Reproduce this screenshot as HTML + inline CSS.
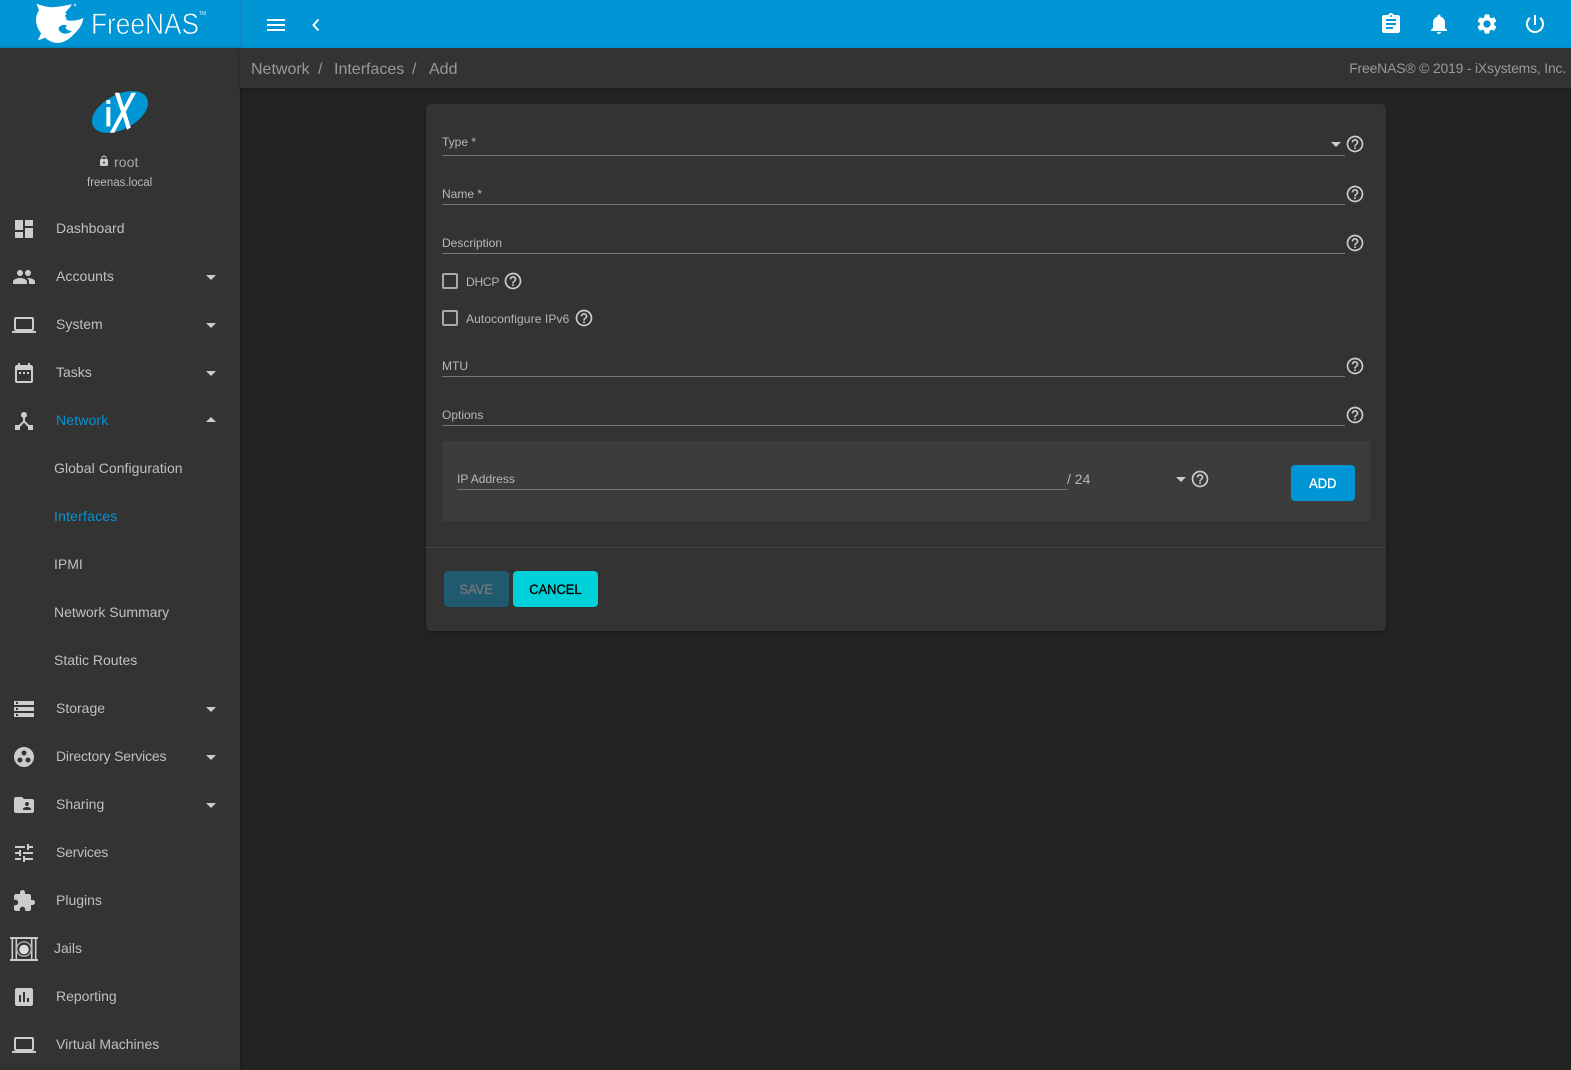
<!DOCTYPE html>
<html lang="en">
<head>
<meta charset="utf-8">
<title>FreeNAS - Network Interfaces Add</title>
<style>
html,body{margin:0;padding:0;width:1571px;height:1070px;overflow:hidden;background:#232323;font-family:"Liberation Sans",Arial,sans-serif;color:#c8c8c8}
*{box-sizing:border-box}
.a{position:absolute;white-space:nowrap}
svg{position:absolute;display:block;fill:currentColor}
#top{position:absolute;left:0;top:0;width:1571px;height:48px;background:#0095d5}
#side{position:absolute;left:0;top:48px;width:240px;height:1022px;background:#333;box-shadow:1px 0 3px rgba(0,0,0,.3)}
#crumb{position:absolute;left:240px;top:48px;width:1331px;height:40px;background:#333;box-shadow:0 1px 3px rgba(0,0,0,.25)}
#card{position:absolute;left:426px;top:104px;width:960px;height:527px;background:#333;border-radius:5px;box-shadow:0 1px 3px rgba(0,0,0,.4)}
.m{position:absolute;left:56px;font-size:14px;line-height:20px;color:#c0c0c0;white-space:nowrap}
.s{left:54px}
.m.blue,.blue{color:#0095d5}
.ic{color:#ccc}
.car{position:absolute;left:206px;width:0;height:0;border-left:5px solid transparent;border-right:5px solid transparent;border-top:5px solid #ccc}
.car.up{border-top:0;border-bottom:5px solid #ccc}
.lab{position:absolute;font-size:12px;line-height:16px;color:#b8b8b8;white-space:nowrap}
.ln{position:absolute;height:1px;background:#777}
.cb{position:absolute;width:16px;height:16px;border:2px solid #a9a9a9;border-radius:2px}
.btn{position:absolute;height:36px;border-radius:4px;text-align:center;font-size:14px;line-height:36px}
.btn span{display:inline-block;transform:scaleX(.92);-webkit-text-stroke:.35px currentColor}
.cr{position:absolute;top:60px;font-size:16px;line-height:20px;color:#999;white-space:nowrap}
</style>
</head>
<body>
<svg width="0" height="0" style="position:absolute">
<defs>
<symbol id="help" viewBox="0 0 24 24"><path d="M11 18h2v-2h-2v2zm1-16C6.480 2 2 6.480 2 12s4.480 10 10 10 10-4.480 10-10S17.520 2 12 2zm0 18c-4.410 0-8-3.590-8-8s3.590-8 8-8 8 3.590 8 8-3.590 8-8 8zm0-14c-2.210 0-4 1.790-4 4h2c0-1.100.9-2 2-2s2 .9 2 2c0 2-3 1.750-3 5h2c0-2.250 3-2.500 3-5 0-2.210-1.790-4-4-4z"/></symbol>
<symbol id="laptop" viewBox="0 0 24 24"><path d="M20 18c1.100 0 1.990-.9 1.990-2L22 6c0-1.100-.9-2-2-2H4c-1.100 0-2 .9-2 2v10c0 1.100.9 2 2 2H0v2h24v-2h-4zM4 6h16v10H4V6z"/></symbol>
<clipPath id="xclip"><path d="M105 85H152V117L130 128L118 135H105Z"/></clipPath>
</defs>
</svg>

<div id="top"></div>
<div id="side"></div>
<div id="crumb"></div>
<div class="a" style="left:240px;top:0;width:1px;height:48px;background:#0a88c2"></div>

<!-- logo -->
<svg style="left:30px;top:0;color:#fff" width="64" height="48" viewBox="30 0 64 48">
<path fill-rule="evenodd" d="M36.500 3.800C41.500 5.500 46.500 7.300 52 7.200C59 7 66 5.500 72 4.300C70.500 6.800 68.500 8.800 67 10.500L65.300 12.500L66.500 14.300L64.800 15.800L66.500 18L66 19.800C69 21.200 76 21.300 83.500 18C82.500 23 80.500 27.500 76.500 31.500C72.500 36 67 41.500 60 42.800C54.500 43.500 49 41.300 45 37.600C43 38.700 40.500 39.600 37.800 40.300C39.200 37.800 40.300 35.500 41 33.300C37.500 28.500 35.700 23.500 36.100 18.500C36.400 15 37.500 12.500 39 10.500C38.200 8.500 37.400 6 36.500 3.800ZM58.500 29C59.800 32.500 63 34 66.500 33.600C69 33.300 71 32.200 72 30.800C68.800 31 65.800 29.500 65.500 27.200L67.200 25.800L64.500 24.800C61 25 58.500 26.800 58.500 29Z"/>
<circle cx="75" cy="5" r="1.300" fill="#a8d8ee"/>
</svg>
<svg style="left:85px;top:0" width="130" height="48" viewBox="85 0 130 48">
<text x="91" y="34" font-family="'Liberation Sans',sans-serif" font-size="29.500" textLength="108" lengthAdjust="spacingAndGlyphs" fill="#fff" stroke="#0095d5" stroke-width=".75">FreeNAS</text>
<text x="199" y="15" font-family="'Liberation Sans',sans-serif" font-size="5" fill="#e0f2fa">TM</text>
</svg>

<!-- top left buttons -->
<div class="a" style="left:267px;top:19px;width:18px;height:2px;background:#fff"></div>
<div class="a" style="left:267px;top:24px;width:18px;height:2px;background:#fff"></div>
<div class="a" style="left:267px;top:29px;width:18px;height:2px;background:#fff"></div>
<svg style="left:310px;top:18px;color:#fff" width="12" height="14" viewBox="0 0 12 14"><path d="M8.500 1.500L3.500 7l5 5.500" fill="none" stroke="#fff" stroke-width="2"/></svg>

<!-- top right icons -->
<svg style="left:1379px;top:12px;color:#fff" width="24" height="24" viewBox="0 0 24 24"><path d="M19 3h-4.180C14.400 1.840 13.300 1 12 1c-1.300 0-2.400.84-2.820 2H5c-1.100 0-2 .9-2 2v14c0 1.100.9 2 2 2h14c1.100 0 2-.9 2-2V5c0-1.100-.9-2-2-2zm-7 0c.55 0 1 .45 1 1s-.45 1-1 1-1-.45-1-1 .45-1 1-1zm2 14H7v-2h7v2zm3-4H7v-2h10v2zm0-4H7V7h10v2z"/></svg>
<svg style="left:1427px;top:12px;color:#fff" width="24" height="24" viewBox="0 0 24 24"><path d="M12 22c1.100 0 2-.9 2-2h-4c0 1.100.89 2 2 2zm6-6v-5c0-3.070-1.640-5.640-4.500-6.320V4c0-.83-.67-1.500-1.500-1.500s-1.500.67-1.500 1.500v.68C7.630 5.360 6 7.920 6 11v5l-2 2v1h16v-1l-2-2z"/></svg>
<svg style="left:1475px;top:12px;color:#fff" width="24" height="24" viewBox="0 0 24 24"><path d="M19.140 12.940c.04-.3.06-.61.06-.94 0-.32-.02-.64-.07-.94l2.030-1.580c.18-.14.23-.41.12-.61l-1.920-3.320c-.12-.22-.37-.29-.59-.22l-2.390.96c-.5-.38-1.030-.7-1.620-.94l-.36-2.540c-.04-.24-.24-.41-.48-.41h-3.840c-.24 0-.43.17-.47.41l-.36 2.540c-.59.24-1.130.57-1.620.94l-2.390-.96c-.22-.08-.47 0-.59.22L2.740 8.870c-.12.21-.08.47.12.61l2.030 1.580c-.05.3-.09.63-.09.94s.02.64.07.94l-2.030 1.580c-.18.14-.23.41-.12.61l1.920 3.320c.12.22.37.29.59.22l2.390-.96c.5.38 1.030.7 1.620.94l.36 2.540c.05.24.24.41.48.41h3.840c.24 0 .44-.17.47-.41l.36-2.540c.59-.24 1.130-.56 1.620-.94l2.390.96c.22.08.47 0 .59-.22l1.920-3.320c.12-.22.07-.47-.12-.61l-2.010-1.580zM12 15.600c-1.980 0-3.600-1.620-3.600-3.600s1.620-3.600 3.600-3.600 3.600 1.620 3.600 3.600-1.620 3.600-3.600 3.600z"/></svg>
<svg style="left:1523px;top:12px;color:#fff" width="24" height="24" viewBox="0 0 24 24"><path d="M13 3h-2v10h2V3zm4.830 2.170l-1.420 1.420C17.990 7.860 19 9.810 19 12c0 3.870-3.130 7-7 7s-7-3.130-7-7c0-2.190 1.010-4.140 2.580-5.420L6.170 5.170C4.230 6.820 3 9.260 3 12c0 4.970 4.030 9 9 9s9-4.030 9-9c0-2.740-1.230-5.180-3.170-6.830z"/></svg>

<!-- breadcrumb -->
<div class="cr" style="left:251px">Network</div>
<div class="cr" style="left:318px">/</div>
<div class="cr" style="left:334px">Interfaces</div>
<div class="cr" style="left:412px">/</div>
<div class="cr" style="left:429px">Add</div>
<div class="a" style="right:5px;top:58px;font-size:14px;line-height:20px;color:#999;letter-spacing:-.21px">FreeNAS® © 2019 - iXsystems, Inc.</div>

<!-- user -->
<svg style="left:88px;top:86px;color:#fff" width="64" height="52" viewBox="88 86 64 52">
<ellipse cx="120" cy="112" rx="30.400" ry="17.300" fill="#0095d5" transform="rotate(-28 120 112)"/>
<text x="0" y="0" font-family="'Liberation Sans',sans-serif" font-size="35" fill="#fff" stroke="#fff" stroke-width=".8" transform="translate(104.500 126)">i</text>
<g clip-path="url(#xclip)"><text x="0" y="0" font-family="'Liberation Sans',sans-serif" font-size="56" fill="#fff" stroke="#fff" stroke-width="1.400" transform="translate(110 132) skewX(-6) scale(.6 1)">X</text></g>
</svg>
<svg class="ic" style="left:98px;top:155px;color:#ccc" width="12" height="12" viewBox="0 0 24 24"><path d="M18 8h-1V6c0-2.760-2.240-5-5-5S7 3.240 7 6v2H6c-1.100 0-2 .9-2 2v10c0 1.100.9 2 2 2h12c1.100 0 2-.9 2-2V10c0-1.100-.9-2-2-2zm-6 9c-1.100 0-2-.9-2-2s.9-2 2-2 2 .9 2 2-.9 2-2 2zm3.100-9H8.900V6c0-1.710 1.390-3.100 3.100-3.100 1.710 0 3.100 1.390 3.100 3.100v2z"/></svg>
<div class="a" style="left:114px;top:152px;font-size:14px;line-height:20px;color:#aaa;letter-spacing:.1px">root</div>
<div class="a" style="left:87px;top:175px;font-size:11.500px;line-height:16px;color:#bbb">freenas.local</div>

<!-- sidebar -->
<svg class="ic" style="left:12px;top:217px" width="24" height="24" viewBox="0 0 24 24"><path d="M3 13h8V3H3v10zm0 8h8v-6H3v6zm10 0h8V11h-8v10zm0-18v6h8V3h-8z"/></svg>
<div class="m" style="top:218px">Dashboard</div>

<svg class="ic" style="left:12px;top:265px" width="24" height="24" viewBox="0 0 24 24"><path d="M16 11c1.660 0 2.990-1.340 2.990-3S17.660 5 16 5c-1.660 0-3 1.340-3 3s1.340 3 3 3zm-8 0c1.660 0 2.990-1.340 2.990-3S9.660 5 8 5C6.340 5 5 6.340 5 8s1.340 3 3 3zm0 2c-2.330 0-7 1.170-7 3.500V19h14v-2.500c0-2.330-4.670-3.500-7-3.500zm8 0c-.29 0-.62.02-.97.05 1.160.84 1.970 1.970 1.970 3.450V19h6v-2.500c0-2.330-4.670-3.500-7-3.500z"/></svg>
<div class="m" style="top:266px;letter-spacing:.05px">Accounts</div><div class="car" style="top:275px"></div>

<svg class="ic" style="left:12px;top:313px" width="24" height="24"><use href="#laptop"/></svg>
<div class="m" style="top:314px">System</div><div class="car" style="top:323px"></div>

<svg class="ic" style="left:12px;top:361px" width="24" height="24" viewBox="0 0 24 24"><path d="M9 11H7v2h2v-2zm4 0h-2v2h2v-2zm4 0h-2v2h2v-2zm2-7h-1V2h-2v2H8V2H6v2H5c-1.110 0-1.990.9-1.990 2L3 20c0 1.100.89 2 2 2h14c1.100 0 2-.9 2-2V6c0-1.100-.9-2-2-2zm0 16H5V9h14v11z"/></svg>
<div class="m" style="top:362px">Tasks</div><div class="car" style="top:371px"></div>

<svg class="ic" style="left:12px;top:409px" width="24" height="24" viewBox="0 0 24 24"><path d="M17 16l-4-4V8.820C14.160 8.400 15 7.300 15 6c0-1.660-1.340-3-3-3S9 4.340 9 6c0 1.300.84 2.400 2 2.820V12l-4 4H3v5h5v-3.050l4-4.200 4 4.200V21h5v-5h-4z"/></svg>
<div class="m blue" style="top:410px;letter-spacing:.15px">Network</div><div class="car up" style="top:417px"></div>

<div class="m s" style="top:458px;letter-spacing:.05px">Global Configuration</div>
<div class="m s blue" style="top:506px;letter-spacing:.2px">Interfaces</div>
<div class="m s" style="top:554px">IPMI</div>
<div class="m s" style="top:602px">Network Summary</div>
<div class="m s" style="top:650px">Static Routes</div>

<svg class="ic" style="left:12px;top:697px" width="24" height="24" viewBox="0 0 24 24"><path d="M2 20h20v-4H2v4zm2-3h2v2H4v-2zM2 4v4h20V4H2zm4 3H4V5h2v2zm-4 7h20v-4H2v4zm2-3h2v2H4v-2z"/></svg>
<div class="m" style="top:698px">Storage</div><div class="car" style="top:707px"></div>

<svg class="ic" style="left:12px;top:745px" width="24" height="24" viewBox="0 0 24 24"><path d="M12 2C6.480 2 2 6.480 2 12s4.480 10 10 10 10-4.480 10-10S17.520 2 12 2zM8 17.500c-1.380 0-2.500-1.120-2.500-2.500s1.120-2.500 2.500-2.500 2.500 1.120 2.500 2.500-1.120 2.500-2.500 2.500zM9.500 8c0-1.380 1.120-2.500 2.500-2.500s2.500 1.120 2.500 2.500-1.120 2.500-2.500 2.500S9.500 9.380 9.500 8zm6.500 9.500c-1.380 0-2.500-1.120-2.500-2.500s1.120-2.500 2.500-2.500 2.500 1.120 2.500 2.500-1.120 2.500-2.500 2.500z"/></svg>
<div class="m" style="top:746px;letter-spacing:-.18px">Directory Services</div><div class="car" style="top:755px"></div>

<svg class="ic" style="left:12px;top:793px" width="24" height="24" viewBox="0 0 24 24"><path d="M20 6h-8l-2-2H4c-1.100 0-1.990.9-1.990 2L2 18c0 1.100.9 2 2 2h16c1.100 0 2-.9 2-2V8c0-1.100-.9-2-2-2zm-5 3c1.100 0 2 .9 2 2s-.9 2-2 2-2-.9-2-2 .9-2 2-2zm4 8h-8v-1c0-1.330 2.670-2 4-2s4 .67 4 2v1z"/></svg>
<div class="m" style="top:794px">Sharing</div><div class="car" style="top:803px"></div>

<svg class="ic" style="left:12px;top:841px" width="24" height="24" viewBox="0 0 24 24"><path d="M3 17v2h6v-2H3zM3 5v2h10V5H3zm10 16v-2h8v-2h-8v-2h-2v6h2zM7 9v2H3v2h4v2h2V9H7zm14 4v-2H11v2h10zm-6-4h2V7h4V5h-4V3h-2v6z"/></svg>
<div class="m" style="top:842px;letter-spacing:-.2px">Services</div>

<svg class="ic" style="left:12px;top:889px" width="24" height="24" viewBox="0 0 24 24"><path d="M20.500 11H19V7c0-1.100-.9-2-2-2h-4V3.500C13 2.120 11.880 1 10.500 1S8 2.120 8 3.500V5H4c-1.100 0-1.990.9-1.990 2v3.800H3.500c1.490 0 2.700 1.210 2.700 2.700s-1.210 2.700-2.700 2.700H2V20c0 1.100.9 2 2 2h3.800v-1.500c0-1.490 1.210-2.700 2.700-2.700 1.490 0 2.700 1.210 2.700 2.700V22H17c1.100 0 2-.9 2-2v-4h1.500c1.380 0 2.500-1.120 2.500-2.500S21.880 11 20.500 11z"/></svg>
<div class="m" style="top:890px">Plugins</div>

<svg class="ic" style="left:10px;top:937px" width="28" height="24" viewBox="0 0 28 24">
<rect x="0" y="0" width="28" height="2"/><rect x="0" y="22" width="28" height="2"/>
<rect x="1.500" y="2" width="1.600" height="20"/><rect x="5.500" y="2" width="1.600" height="20"/><rect x="20.900" y="2" width="1.600" height="20"/><rect x="24.900" y="2" width="1.600" height="20"/>
<circle cx="14" cy="12" r="7.200" fill="none" stroke="#aaa" stroke-width="1.400"/><circle cx="14" cy="12.500" r="4.800" fill="#ddd"/>
</svg>
<div class="m" style="left:54px;top:938px">Jails</div>

<svg class="ic" style="left:12px;top:985px" width="24" height="24" viewBox="0 0 24 24"><path d="M19 3H5c-1.100 0-2 .9-2 2v14c0 1.100.9 2 2 2h14c1.100 0 2-.9 2-2V5c0-1.100-.9-2-2-2zM9 17H7v-7h2v7zm4 0h-2V7h2v10zm4 0h-2v-4h2v4z"/></svg>
<div class="m" style="top:986px">Reporting</div>

<svg class="ic" style="left:12px;top:1033px" width="24" height="24"><use href="#laptop"/></svg>
<div class="m" style="top:1034px">Virtual Machines</div>

<!-- card -->
<div id="card"></div>
<div class="lab" style="left:442px;top:134px">Type *</div>
<div class="ln" style="left:442px;top:155px;width:903px"></div>
<div class="car" style="left:1331px;top:142px"></div>
<svg class="ic" style="left:1345px;top:134px" width="20" height="20"><use href="#help"/></svg>

<div class="lab" style="left:442px;top:186px">Name *</div>
<div class="ln" style="left:442px;top:204px;width:903px"></div>
<svg class="ic" style="left:1345px;top:184px" width="20" height="20"><use href="#help"/></svg>

<div class="lab" style="left:442px;top:235px">Description</div>
<div class="ln" style="left:442px;top:253px;width:903px"></div>
<svg class="ic" style="left:1345px;top:233px" width="20" height="20"><use href="#help"/></svg>

<div class="cb" style="left:442px;top:273px"></div>
<div class="lab" style="left:466px;top:274px;letter-spacing:-.2px">DHCP</div>
<svg class="ic" style="left:503px;top:271px" width="20" height="20"><use href="#help"/></svg>

<div class="cb" style="left:442px;top:310px"></div>
<div class="lab" style="left:466px;top:311px;letter-spacing:.11px">Autoconfigure IPv6</div>
<svg class="ic" style="left:574px;top:308px" width="20" height="20"><use href="#help"/></svg>

<div class="lab" style="left:442px;top:358px">MTU</div>
<div class="ln" style="left:442px;top:376px;width:903px"></div>
<svg class="ic" style="left:1345px;top:356px" width="20" height="20"><use href="#help"/></svg>

<div class="lab" style="left:442px;top:407px">Options</div>
<div class="ln" style="left:442px;top:425px;width:903px"></div>
<svg class="ic" style="left:1345px;top:405px" width="20" height="20"><use href="#help"/></svg>

<div class="a" style="left:442px;top:441px;width:928px;height:80px;background:#3c3c3c"></div>
<div class="lab" style="left:457px;top:471px">IP Address</div>
<div class="ln" style="left:457px;top:489px;width:611px"></div>
<div class="a" style="left:1067px;top:470px;font-size:14px;line-height:18px;color:#b8b8b8">/ 24</div>
<div class="car" style="left:1176px;top:477px"></div>
<svg class="ic" style="left:1190px;top:469px" width="20" height="20"><use href="#help"/></svg>
<div class="btn" style="left:1291px;top:465px;width:64px;background:#0095d5;color:#fff"><span>ADD</span></div>

<div class="a" style="left:426px;top:547px;width:960px;height:1px;background:#444"></div>
<div class="btn" style="left:444px;top:571px;width:65px;background:#1f5a70;color:#777"><span>SAVE</span></div>
<div class="btn" style="left:513px;top:571px;width:85px;background:#00d0d8;color:#000"><span>CANCEL</span></div>
</body>
</html>
